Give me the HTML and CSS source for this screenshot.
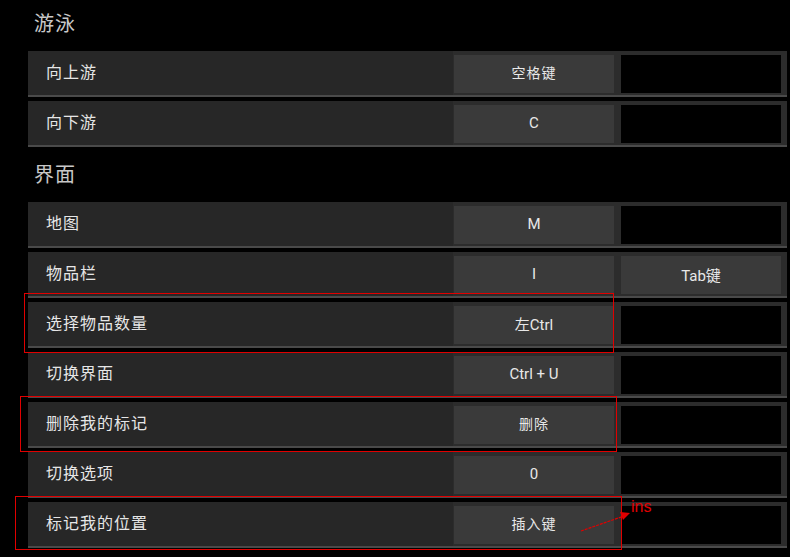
FILE: index.html
```html
<!DOCTYPE html>
<html lang="zh-CN">
<head>
  <meta charset="UTF-8" />
  <meta name="viewport" content="width=device-width, initial-scale=1.0"/>
  <title>按键设置</title>
  <link rel="stylesheet" href="styles.css">
</head>
<body>
  <div class="settings">
    <h2 class="section">游泳</h2>
    <div class="row">
      <div class="label">向上游</div>
      <div class="binds">
        <div class="key cjk">空格键</div>
        <div class="key empty"></div>
      </div>
    </div>
    <div class="row">
      <div class="label">向下游</div>
      <div class="binds">
        <div class="key">C</div>
        <div class="key empty"></div>
      </div>
    </div>

    <h2 class="section">界面</h2>
    <div class="row">
      <div class="label">地图</div>
      <div class="binds">
        <div class="key">M</div>
        <div class="key empty"></div>
      </div>
    </div>
    <div class="row">
      <div class="label">物品栏</div>
      <div class="binds">
        <div class="key">I</div>
        <div class="key">Tab键</div>
      </div>
    </div>
    <div class="row">
      <div class="label">选择物品数量</div>
      <div class="binds">
        <div class="key mixed">左Ctrl</div>
        <div class="key empty"></div>
      </div>
    </div>
    <div class="row">
      <div class="label">切换界面</div>
      <div class="binds">
        <div class="key">Ctrl + U</div>
        <div class="key empty"></div>
      </div>
    </div>
    <div class="row">
      <div class="label">删除我的标记</div>
      <div class="binds">
        <div class="key cjk">删除</div>
        <div class="key empty"></div>
      </div>
    </div>
    <div class="row">
      <div class="label">切换选项</div>
      <div class="binds">
        <div class="key">0</div>
        <div class="key empty"></div>
      </div>
    </div>
    <div class="row">
      <div class="label">标记我的位置</div>
      <div class="binds">
        <div class="key cjk">插入键</div>
        <div class="key empty"></div>
      </div>
    </div>
  </div>

  <!-- annotations drawn over the screenshot -->
  <div class="mark mark-1"></div>
  <div class="mark mark-2"></div>
  <div class="mark mark-3"></div>
  <svg class="arrow" width="60" height="30" viewBox="0 0 60 30">
    <line x1="1" y1="28" x2="44" y2="13" stroke="#e00000" stroke-width="1.2" stroke-dasharray="3 1"/>
    <polygon points="50,10 40,9 43,17" fill="#e00000"/>
  </svg>
  <div class="note">ins</div>
</body>
</html>
```

FILE: styles.css
```css
* {
  margin: 0;
  padding: 0;
  box-sizing: border-box;
}

body {
  background: #000;
  color: #e6e6e6;
  font-family: 'Noto Sans CJK SC', 'Noto Sans', sans-serif;
  width: 790px;
  height: 557px;
  overflow: hidden;
  position: relative;
}

.settings {
  padding: 0 3px 0 28px;
}

.section {
  height: 51px;
  line-height: 45px;
  padding-left: 6px;
  font-size: 20px;
  font-weight: normal;
  letter-spacing: 1px;
  color: #c8c8c8;
}

.row {
  display: flex;
  height: 46px;
  margin-bottom: 4px;
  border-bottom: 2px solid #4a4a4a;
}

.label {
  flex: 1;
  background: #272727;
  padding-left: 18px;
  line-height: 40px;
  font-size: 16px;
  letter-spacing: 1px;
}

.binds {
  display: flex;
  gap: 7px;
  background: #2c2c2c;
  padding: 4px 6px 2px 1px;
}

.key {
  width: 160px;
  height: 38px;
  padding-bottom: 2px;
  background: #3a3a3a;
  color: #e8e8e8;
  display: flex;
  align-items: center;
  justify-content: center;
  font-family: Roboto, 'Noto Sans CJK SC', sans-serif;
  font-size: 15px;
}

.key.mixed {
  padding-bottom: 4px;
}

.key.cjk {
  padding-bottom: 5px;
  font-family: 'Noto Sans CJK SC', sans-serif;
  font-size: 14px;
  letter-spacing: 1px;
}

.key.empty {
  background: #000;
}

.mark {
  position: absolute;
  border: 1px solid #e00000;
}

.mark-1 {
  left: 24px;
  top: 293px;
  width: 590px;
  height: 60px;
}

.mark-2 {
  left: 20px;
  top: 396px;
  width: 597px;
  height: 56px;
}

.mark-3 {
  left: 15px;
  top: 496px;
  width: 607px;
  height: 54px;
}

.arrow {
  position: absolute;
  left: 580px;
  top: 503px;
}

.note {
  position: absolute;
  left: 631px;
  top: 498px;
  color: #e00000;
  font-family: 'Liberation Sans', sans-serif;
  font-size: 16px;
}
```
